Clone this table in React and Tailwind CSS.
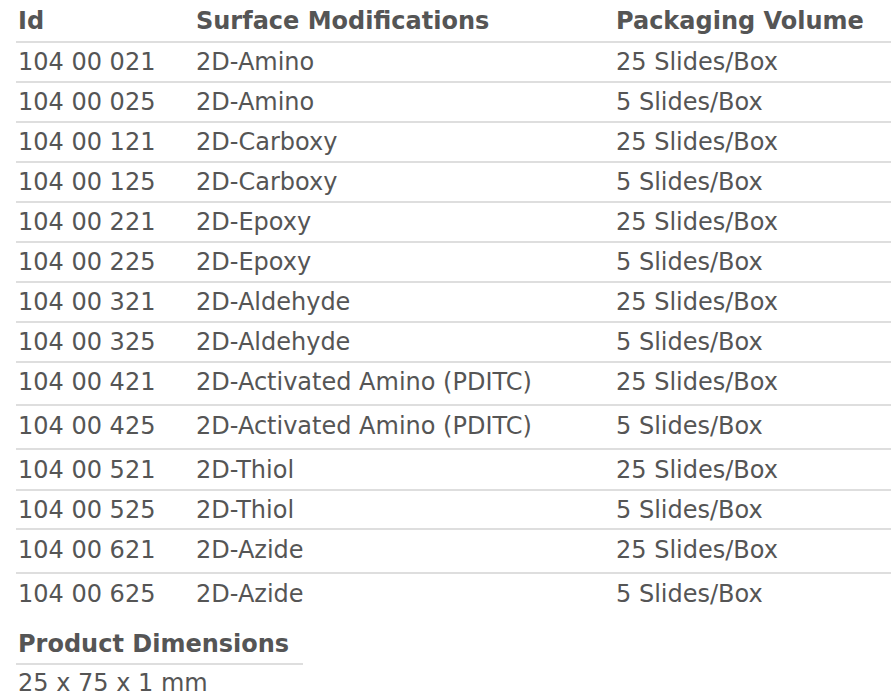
const rows = [
  ["104 00 021", "2D-Amino", "25 Slides/Box", "h-[40px]"],
  ["104 00 025", "2D-Amino", "5 Slides/Box", "h-[40px]"],
  ["104 00 121", "2D-Carboxy", "25 Slides/Box", "h-[40px]"],
  ["104 00 125", "2D-Carboxy", "5 Slides/Box", "h-[40px]"],
  ["104 00 221", "2D-Epoxy", "25 Slides/Box", "h-[40px]"],
  ["104 00 225", "2D-Epoxy", "5 Slides/Box", "h-[40px]"],
  ["104 00 321", "2D-Aldehyde", "25 Slides/Box", "h-[40px]"],
  ["104 00 325", "2D-Aldehyde", "5 Slides/Box", "h-[40px]"],
  ["104 00 421", "2D-Activated Amino (PDITC)", "25 Slides/Box", "h-[43px] pb-[3px]"],
  ["104 00 425", "2D-Activated Amino (PDITC)", "5 Slides/Box", "h-[44px] pb-[2px]"],
  ["104 00 521", "2D-Thiol", "25 Slides/Box", "h-[41px]"],
  ["104 00 525", "2D-Thiol", "5 Slides/Box", "h-[39px]"],
  ["104 00 621", "2D-Azide", "25 Slides/Box", "h-[44px] pb-[2px]"],
  ["104 00 625", "2D-Azide", "5 Slides/Box", "h-[43px] pb-[2px]"],
];

export default function App() {
  return (
    <div className="bg-white min-h-[700px] overflow-hidden pl-4 text-[#555] text-[24px] font-['DejaVu_Sans',Verdana,sans-serif]">
      {/* Table */}
      <div>
        <div className="grid grid-cols-[178px_420px_1fr] h-[41px] items-center font-bold pl-[2px]">
          <div>Id</div>
          <div>Surface Modifications</div>
          <div>Packaging Volume</div>
        </div>
        {rows.map(([id, surf, pack, h]) => (
          <div
            key={id}
            className={`grid grid-cols-[178px_420px_1fr] items-center border-t-2 border-[#dedede] pl-[2px] ${h}`}
          >
            <div>{id}</div>
            <div>{surf}</div>
            <div>{pack}</div>
          </div>
        ))}
      </div>

      {/* Dimensions */}
      <div className="mt-[10px] w-[287px]">
        <div className="font-bold h-[40px] flex items-center pl-[2px] border-b-2 border-[#dedede]">
          Product Dimensions
        </div>
        <div className="h-[36px] flex items-center pl-[2px]">25 x 75 x 1 mm</div>
      </div>
    </div>
  );
}
